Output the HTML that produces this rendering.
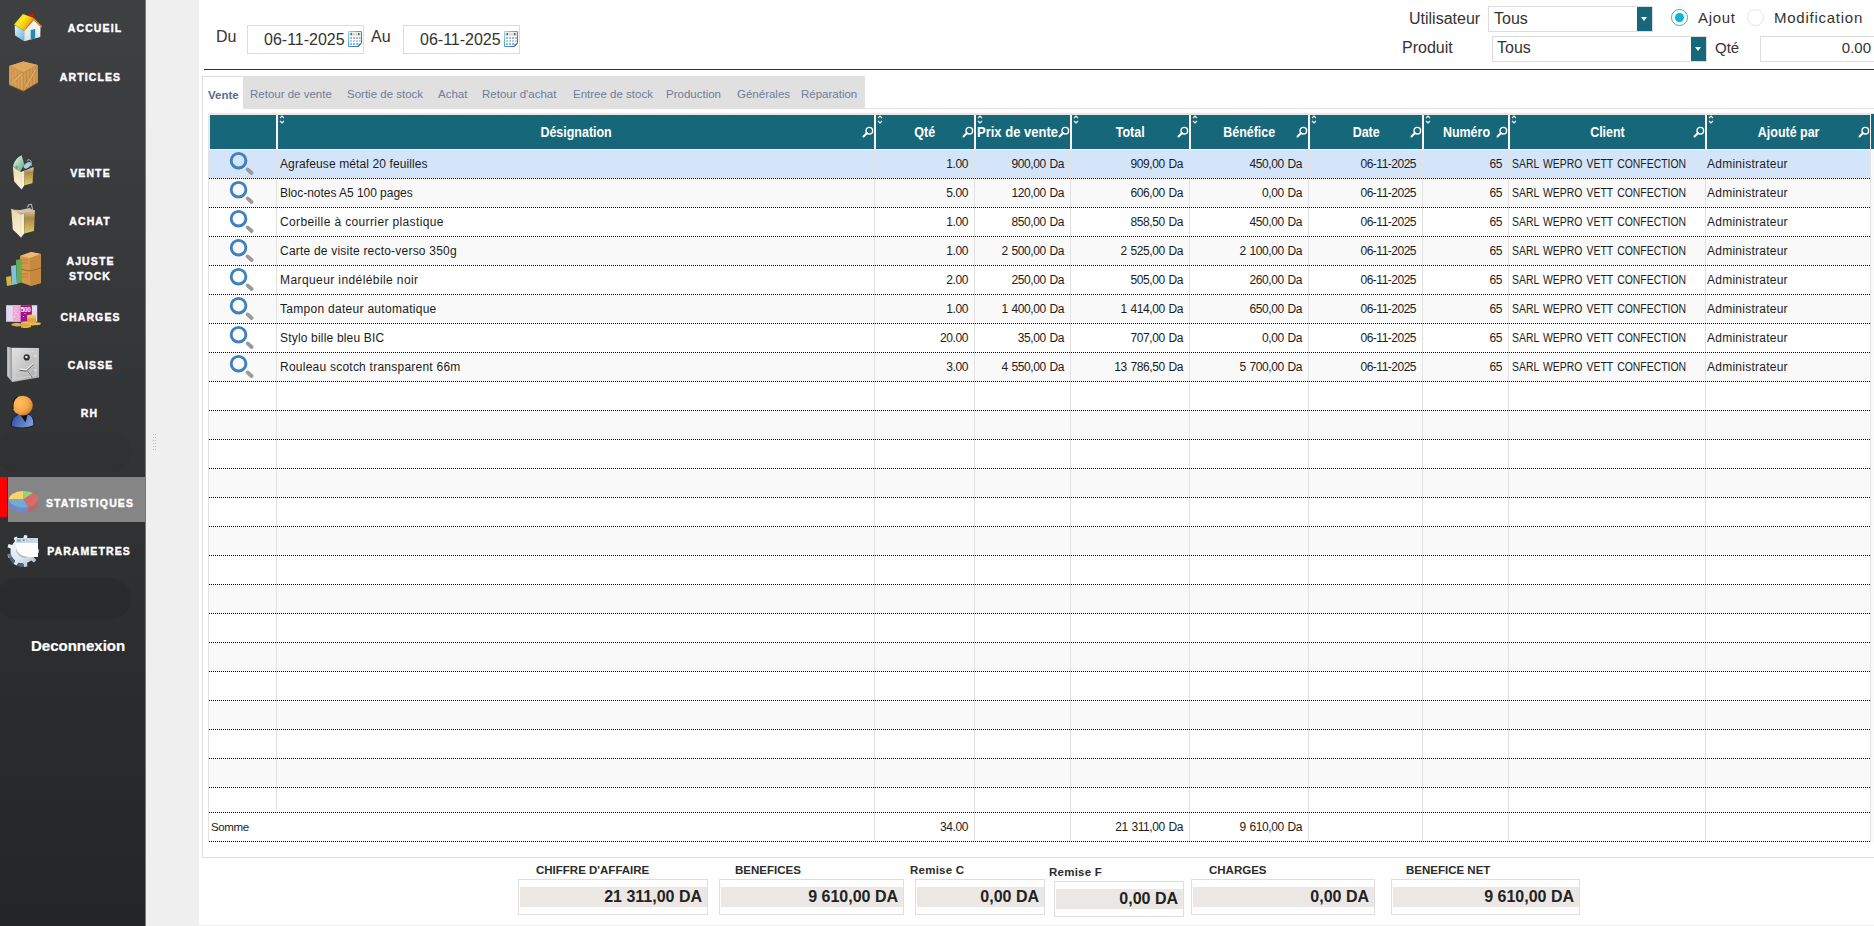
<!DOCTYPE html>
<html><head><meta charset="utf-8"><title>Statistiques</title>
<style>
*{margin:0;padding:0;box-sizing:border-box}
html,body{width:1874px;height:926px;overflow:hidden;background:#fff;font-family:"Liberation Sans",sans-serif;position:relative}
.a{position:absolute}
.side{left:0;top:0;width:145px;height:926px;background:linear-gradient(#3f4042 0%,#333436 45%,#242526 100%)}
.cyan{left:145px;top:0;width:1px;height:926px;background:#12a3a8}
.strip{left:146px;top:0;width:53px;height:926px;background:#efefef}
.mi{color:#fff;font-weight:700;font-size:10.5px;letter-spacing:1.1px;-webkit-text-stroke:0.4px #fff;white-space:nowrap;line-height:15px;text-align:center}
.lbl{font-size:16px;color:#333;white-space:nowrap;line-height:18px}
.inp{border:1px solid #dcdcdc;background:#fff}
.tab{top:87px;font-size:11.5px;color:#6a7894;white-space:nowrap;line-height:14px}
.hc{top:115px;height:34px;background:#17677a}
.ht{top:124px;font-size:14px;font-weight:700;color:#fff;white-space:nowrap;line-height:17px;text-align:center}
.ht span{display:inline-block;transform:scaleX(0.89)}
.row{left:209px;width:1662px;height:29px;border-bottom:1px dotted #000}
.vs{width:1px;background:#e2e2e2}
.ct{font-size:12px;color:#1c1c1c;white-space:nowrap;line-height:14px}
.n{letter-spacing:-0.4px;word-spacing:0.7px}
.dl{height:1px;background:repeating-linear-gradient(90deg,#000 0 1px,transparent 1px 2px)}
.r{text-align:right}
.sl{font-size:11.5px;font-weight:700;color:#2b2b2b;white-space:nowrap;line-height:14px}
.sb{border:1px solid #dedede;background:#fff}
.sf{background:#ebe7e4}
.sv{font-size:16px;font-weight:700;color:#222;white-space:nowrap;line-height:18px;text-align:right}
</style></head><body>

<div class="a side"></div>
<div class="a" style="left:-6px;top:432px;width:137px;height:39px;border-radius:20px;background:rgba(0,0,0,0.03)"></div>
<div class="a" style="left:-4px;top:578px;width:135px;height:42px;border-radius:21px;background:rgba(0,0,0,0.07)"></div>
<div class="a cyan"></div>
<div class="a strip"></div>
<div class="a" style="left:153px;top:434px;width:1px;height:1px;background:#b8b8b8"></div>
<div class="a" style="left:155px;top:434px;width:1px;height:1px;background:#b8b8b8"></div>
<div class="a" style="left:153px;top:437px;width:1px;height:1px;background:#b8b8b8"></div>
<div class="a" style="left:155px;top:437px;width:1px;height:1px;background:#b8b8b8"></div>
<div class="a" style="left:153px;top:440px;width:1px;height:1px;background:#b8b8b8"></div>
<div class="a" style="left:155px;top:440px;width:1px;height:1px;background:#b8b8b8"></div>
<div class="a" style="left:153px;top:443px;width:1px;height:1px;background:#b8b8b8"></div>
<div class="a" style="left:155px;top:443px;width:1px;height:1px;background:#b8b8b8"></div>
<div class="a" style="left:153px;top:446px;width:1px;height:1px;background:#b8b8b8"></div>
<div class="a" style="left:155px;top:446px;width:1px;height:1px;background:#b8b8b8"></div>
<div class="a" style="left:153px;top:449px;width:1px;height:1px;background:#b8b8b8"></div>
<div class="a" style="left:155px;top:449px;width:1px;height:1px;background:#b8b8b8"></div>
<div class="a" style="left:8px;top:477px;width:137px;height:45px;background:#858585"></div>
<div class="a" style="left:0;top:477px;width:7px;height:40px;background:#fe0000"></div>
<div class="a mi" style="left:63px;top:21px;width:63px;text-indent:1px">ACCUEIL</div>
<div class="a mi" style="left:55px;top:70px;width:70px;text-indent:1px">ARTICLES</div>
<div class="a mi" style="left:65px;top:166px;width:50px;text-indent:1px">VENTE</div>
<div class="a mi" style="left:64px;top:214px;width:51px;text-indent:1px">ACHAT</div>
<div class="a mi" style="left:62px;top:254px;width:56px;text-indent:1px">AJUSTE<br>STOCK</div>
<div class="a mi" style="left:56px;top:310px;width:68px;text-indent:1px">CHARGES</div>
<div class="a mi" style="left:63px;top:358px;width:54px;text-indent:1px">CAISSE</div>
<div class="a mi" style="left:76px;top:406px;width:26px;text-indent:1px">RH</div>
<div class="a mi" style="left:41px;top:496px;width:97px;text-indent:1px">STATISTIQUES</div>
<div class="a mi" style="left:42px;top:544px;width:93px;text-indent:1px">PARAMETRES</div>
<div class="a" style="left:31px;top:637px;font-size:15px;font-weight:700;color:#fff;white-space:nowrap;line-height:17px;-webkit-text-stroke:0.2px #fff">Deconnexion</div>
<svg class="a" style="left:0;top:0" width="48" height="48" viewBox="0 0 48 48">
<defs><linearGradient id="hr" x1="0" y1="0" x2="1" y2="0.6"><stop offset="0" stop-color="#f5b800"/><stop offset="0.45" stop-color="#f6ee1c"/><stop offset="1" stop-color="#f28a0c"/></linearGradient>
<linearGradient id="hw" x1="0" y1="0" x2="0" y2="1"><stop offset="0" stop-color="#fafcfd"/><stop offset="1" stop-color="#d3e3ea"/></linearGradient>
<linearGradient id="hl" x1="0" y1="0" x2="1" y2="1"><stop offset="0" stop-color="#e6f6fb"/><stop offset="1" stop-color="#5fb6d6"/></linearGradient></defs>
<path d="M14.7 25.3 L24.2 30.7 L24.2 41.3 L15.1 35.5 Z" fill="url(#hl)"/>
<path d="M24.2 30.7 L33.9 20.1 L40.5 26.5 L40.3 36.9 L24.2 41.3 Z" fill="url(#hw)"/>
<rect x="29.2" y="13.4" width="4.6" height="3.6" rx="1" fill="#e20a0a"/>
<path d="M14 24.6 L22.9 14 L33.9 17.9 L24.2 30.7 Z" fill="url(#hr)"/>
<path d="M33.9 17.9 L42.2 26.6 L41.2 27.4 L33.9 20.4 L24.2 30.9 L24.2 30.7 Z" fill="#f08c12"/>
<path d="M30.7 30 L35.2 29 L35.2 38.6 L30.7 39.8 Z" fill="#2a88a8"/>
</svg>
<svg class="a" style="left:0;top:50px" width="48" height="50" viewBox="0 50 48 50">
<path d="M9.1 65.9 L23.4 61.4 L37.6 65.1 L37.6 82.6 L23.4 91 L9.1 84.7 Z" fill="#d9a159"/>
<path d="M9.1 65.9 L23.4 61.4 L37.6 65.1 L23.4 72.8 Z" fill="#dea862"/>
<path d="M23.4 72.8 L37.6 65.1 L37.6 82.6 L23.4 91 Z" fill="#d59b52"/>
<g stroke="#b07a3a" stroke-width="0.55" fill="none" opacity="0.9">
<path d="M9.1 65.9 L23.4 72.8 L37.6 65.1 M23.4 72.8 L23.4 91"/>
<path d="M11.5 68 L11.5 84 M14 69 L14 86 M17 70.5 L17 87.5 M20 72 L20 89 M26.5 71.5 L26.5 89 M29.5 70 L29.5 87.5 M32.5 68.5 L32.5 86 M35.5 66.5 L35.5 84"/>
</g>
<path d="M10.5 82.8 L21.6 72.4 L23 74 L12 84.6 Z" fill="#e3ae66" stroke="#a87236" stroke-width="0.4"/>
<path d="M24.6 86.4 L35.4 68.4 L36.8 69.6 L26.2 87.6 Z" fill="#e3ae66" stroke="#a87236" stroke-width="0.4"/>
<path d="M9.1 84.7 L23.4 91 L37.6 82.6" stroke="#9c6a30" stroke-width="0.6" fill="none"/>
</svg>
<svg class="a" style="left:0;top:150px" width="44" height="44" viewBox="0 150 44 44">
<defs><linearGradient id="vg" x1="0" y1="0" x2="1" y2="1"><stop offset="0" stop-color="#f4faf2"/><stop offset="1" stop-color="#5aa874"/></linearGradient>
<linearGradient id="vf" x1="0" y1="0" x2="0.3" y2="1"><stop offset="0" stop-color="#ead7a4"/><stop offset="1" stop-color="#fbf3dc"/></linearGradient>
<linearGradient id="vr" x1="0" y1="0" x2="0" y2="1"><stop offset="0" stop-color="#e6d3a8"/><stop offset="0.3" stop-color="#a88a48"/><stop offset="1" stop-color="#e2cc68"/></linearGradient></defs>
<path d="M13 166 Q15 158 21.6 155.2 L24.4 164.7 L20.2 171.4 Z" fill="url(#vg)"/>
<path d="M26.8 160.5 Q29 158.5 31 161 L31.4 166" stroke="#b8b2aa" stroke-width="1" fill="none"/>
<ellipse cx="27.4" cy="165.4" rx="4.2" ry="2.4" transform="rotate(-38 27.4 165.4)" fill="#9fd0ec"/>
<path d="M12.8 166.2 L20.9 171.9 L24.7 170.4 L24.4 185.2 L21.6 189.4 L14.2 181.6 Z" fill="url(#vf)"/>
<path d="M24.7 170.4 L33.7 167.1 L32.5 183.3 L24.4 185.2 Z" fill="url(#vr)"/>
<path d="M20.9 171.9 L21.6 189.4" stroke="#e8d8b0" stroke-width="0.6"/>
<ellipse cx="16.6" cy="167.6" rx="1.3" ry="2" fill="#6aa882"/>
</svg>
<svg class="a" style="left:0;top:198px" width="44" height="44" viewBox="0 198 44 44">
<defs><linearGradient id="af" x1="0" y1="0" x2="0.3" y2="1"><stop offset="0" stop-color="#ead6a2"/><stop offset="1" stop-color="#fbf3dc"/></linearGradient>
<linearGradient id="ar" x1="0" y1="0" x2="0" y2="1"><stop offset="0" stop-color="#dcc6a8"/><stop offset="0.35" stop-color="#a88a48"/><stop offset="1" stop-color="#e0ca66"/></linearGradient></defs>
<path d="M27.5 207.5 Q28.5 203.5 31.5 204.5 L32.8 211" stroke="#bdb6ae" stroke-width="1.1" fill="none"/>
<path d="M11.5 209.5 L20 214 L34.5 211 L29.5 208 L20 210 Z" fill="#d6c0ae"/>
<path d="M11.2 208.5 L20.5 214.5 L24.5 213 L24.2 233.5 L21 237.5 L12.8 229.5 Z" fill="url(#af)"/>
<path d="M24.5 213 L35 210 L34 231 L24.2 233.5 Z" fill="url(#ar)"/>
<path d="M20.5 214.5 L21 237.5" stroke="#e8d8b0" stroke-width="0.6"/>
</svg>
<svg class="a" style="left:5px;top:251px" width="37" height="35" viewBox="0 0 37 35">
<path d="M15 5 L26 1 L36 3 L36 32 L26 35 L15 31 Z" fill="#d4964c"/>
<path d="M15 5 L26 1 L36 3 L25 7 Z" fill="#ebbb7c"/>
<path d="M25 7 L36 3 L36 32 L25 35 Z" fill="#c8883e"/>
<path d="M15 18 L25 20 L36 17" stroke="#9c6a30" stroke-width="1" fill="none"/>
<path d="M17 9 H23 M17 12 H23 M17 23 H23 M17 26 H23" stroke="#b77a3a" stroke-width="0.7"/>
<path d="M1 26 L6 25 L7 34 L2 35 Z" fill="#d6b640"/>
<path d="M6 15 L11 14 L12 33 L7 34 Z" fill="#86c0d8"/>
<path d="M11 9 L17 8 L17 31 L12 33 Z" fill="#5fae58"/>
</svg>
<svg class="a" style="left:0;top:298px" width="46" height="36" viewBox="0 298 46 36">
<defs><linearGradient id="cg" x1="0" y1="0" x2="0" y2="1"><stop offset="0" stop-color="#f6d27a"/><stop offset="0.5" stop-color="#d9a236"/><stop offset="1" stop-color="#f0c050"/></linearGradient></defs>
<rect x="6.1" y="305.2" width="31.1" height="16.5" fill="#e2daee"/>
<rect x="12.7" y="305.2" width="7.9" height="16.5" fill="#f2a9d4"/>
<rect x="20.6" y="305.2" width="11.3" height="16.5" fill="#a2128c"/>
<text x="20.8" y="311.6" font-size="6.4" font-weight="700" fill="#fff" font-family="Liberation Sans" letter-spacing="-0.3">500</text>
<g fill="#fff" opacity="0.8"><rect x="15.5" y="308" width="1" height="1"/><rect x="14" y="310.5" width="1" height="1"/><rect x="15.5" y="313" width="1" height="1"/><rect x="14" y="316" width="1" height="1"/><rect x="23" y="316" width="1" height="1"/><rect x="24.5" y="313" width="1" height="1"/></g>
<path d="M11.3 324 Q16 322.5 21 323.5 L21 326 Q16 327 11.8 325.6 Z" fill="url(#cg)"/>
<path d="M21 322.5 Q26 321 31 322 L31 327 Q26 328.5 21 327.5 Z" fill="url(#cg)"/>
<path d="M26.9 315.5 Q31.5 314 36 315 L36 322.5 Q39 322 40.9 323 L40.5 324.5 Q37 325.5 36.5 325 Q31 326 27.5 324.5 Z" fill="url(#cg)"/>
</svg>
<svg class="a" style="left:0;top:342px" width="46" height="44" viewBox="0 342 46 44">
<defs><linearGradient id="kf" x1="0" y1="0" x2="1" y2="1"><stop offset="0" stop-color="#e4e4e4"/><stop offset="1" stop-color="#a8a8a8"/></linearGradient>
<linearGradient id="ks" x1="0" y1="0" x2="1" y2="0"><stop offset="0" stop-color="#d8d8d8"/><stop offset="1" stop-color="#9a9a9a"/></linearGradient></defs>
<path d="M7.2 346.8 L12 347.7 L12 381.9 L7.2 376 Z" fill="url(#ks)"/>
<path d="M12 347.7 L39 348 L39 377.5 L12 381.9 Z" fill="url(#kf)"/>
<path d="M15 351 L36 351.5 L36 375.5 L15 378.5 Z" fill="none" stroke="#d6d6d6" stroke-width="0.8"/>
<circle cx="26.7" cy="357.4" r="3.1" fill="#2e2e2e"/>
<circle cx="26.4" cy="357" r="1.3" fill="#e8e8e8"/>
<path d="M19.6 369.3 L26.5 370 L33.4 363.4 M26.5 370 L31.5 376.7" stroke="#f2f2f2" stroke-width="1.4" fill="none"/>
<path d="M19.6 370.3 L26.5 371 L33.4 364.4 M27.2 370.5 L32.2 377.3" stroke="#2a2a2a" stroke-width="0.7" fill="none"/>
<rect x="34.5" y="355" width="1.6" height="1.6" fill="#eee"/><rect x="34.5" y="369.5" width="1.6" height="1.6" fill="#eee"/>
</svg>
<svg class="a" style="left:0;top:390px" width="46" height="42" viewBox="0 390 46 42">
<defs><radialGradient id="rhh" cx="0.35" cy="0.35" r="0.75"><stop offset="0" stop-color="#ffc060"/><stop offset="0.6" stop-color="#f3a648"/><stop offset="1" stop-color="#c87428"/></radialGradient>
<linearGradient id="rhb" x1="0" y1="0" x2="1" y2="0.3"><stop offset="0" stop-color="#2a4aa0"/><stop offset="1" stop-color="#7a9ad6"/></linearGradient></defs>
<path d="M11.2 426.5 Q11 417 18 414.5 L28 414 Q34 415.5 34 425.5 Q23 430 11.2 426.5 Z" fill="url(#rhb)" stroke="#0c1530" stroke-width="0.9"/>
<path d="M20.5 415 L25.5 422.5 L27.5 415 Z" fill="#111"/>
<ellipse cx="22.6" cy="405.6" rx="10.2" ry="9.9" fill="url(#rhh)"/>
<path d="M13 409 Q12 400 17 397" stroke="#111" stroke-width="1.2" fill="none"/>
</svg>
<svg class="a" style="left:0;top:484px" width="46" height="36" viewBox="0 484 46 36"><path d="M38.10 499.30 A14.6 8.3 0 0 1 28.01 507.19 L28.01 512.19 A14.6 8.3 0 0 0 38.10 504.30 Z" fill="#b46a6c"/><path d="M28.01 507.19 A14.6 8.3 0 0 1 8.90 499.30 L8.90 504.30 A14.6 8.3 0 0 0 28.01 512.19 Z" fill="#7088c6"/><path d="M23.5 499.3 L8.91 499.59 A14.6 8.3 0 0 1 22.99 491.01 Z" fill="#fcd26a"/><path d="M23.5 499.3 L22.99 491.01 A14.6 8.3 0 0 1 33.08 493.04 Z" fill="#8ed67e"/><path d="M23.5 499.3 L33.08 493.04 A14.6 8.3 0 0 1 28.01 507.19 Z" fill="#d96a6a"/><path d="M23.5 499.3 L28.01 507.19 A14.6 8.3 0 0 1 8.91 499.59 Z" fill="#74aad6"/></svg>
<svg class="a" style="left:5px;top:534px" width="36" height="34" viewBox="0 0 34 34">
<defs><linearGradient id="gr" x1="0" y1="0" x2="1" y2="1"><stop offset="0" stop-color="#f2f8fd"/><stop offset="0.55" stop-color="#dde9f4"/><stop offset="1" stop-color="#9fb3c6"/></linearGradient></defs>
<path d="M29.1 13.7 L29.3 15.0 L32.9 15.3 L32.9 18.7 L29.3 19.0 L28.4 22.2 L27.7 23.4 L30.3 25.9 L28.1 28.5 L25.2 26.4 L22.4 28.3 L21.1 28.8 L21.4 32.4 L18.1 33.0 L17.2 29.5 L13.9 29.1 L12.5 28.7 L10.5 31.6 L7.6 29.9 L9.1 26.7 L6.8 24.2 L6.1 23.1 L2.6 24.0 L1.5 20.8 L4.7 19.4 L4.5 16.0 L4.7 14.6 L1.5 13.2 L2.6 10.0 L6.1 10.9 L8.1 8.2 L9.1 7.3 L7.6 4.1 L10.5 2.4 L12.5 5.3 L15.8 4.6 L17.2 4.5 L18.1 1.0 L21.4 1.6 L21.1 5.2 L24.1 6.7 L25.2 7.6 L28.1 5.5 L30.3 8.1 L27.7 10.6 Z" fill="url(#gr)"/>
<path d="M1.5 20.8 L4.7 19.4 L6.1 23.1 L6.8 24.2 L9.1 26.7 L7.6 29.9 L10.5 31.6 L12.5 28.7 L13.9 29.1 L17.2 29.5 L18.1 33.0 L14 33 L6 29 Z" fill="#56687a" opacity="0.85"/>
<rect x="10" y="4" width="22" height="5" fill="#c9d8ea"/>
<rect x="11" y="5.5" width="4" height="2" fill="#7aa6d6"/><rect x="17" y="5.5" width="1.5" height="1.5" fill="#e04040"/><rect x="20" y="5.5" width="1.5" height="1.5" fill="#9ed08a"/><rect x="25" y="5.5" width="1.5" height="1.5" fill="#e8c040"/>
<path d="M10 9 L32 9 L32 23 L22 23 Q12 22 10 14 Z" fill="#fdfdfd"/>
<path d="M10 14 Q12 22 22 23 L20 24 Q11 23 10 16 Z" fill="#b8bcc0"/>
</svg>
<div class="a lbl" style="left:216px;top:28px">Du</div>
<div class="a inp" style="left:247px;top:25px;width:117px;height:29px"></div>
<div class="a lbl" style="left:264px;top:31px">06-11-2025</div>
<div class="a lbl" style="left:371px;top:28px">Au</div>
<div class="a inp" style="left:403px;top:25px;width:117px;height:29px"></div>
<div class="a lbl" style="left:420px;top:31px">06-11-2025</div>
<svg class="a" style="left:348px;top:31px" width="15" height="17" viewBox="0 0 15 17">
<defs><linearGradient id="cb348" x1="0" y1="0" x2="1" y2="1"><stop offset="0" stop-color="#9ad8f0"/><stop offset="0.5" stop-color="#4c98d4"/><stop offset="1" stop-color="#1e5fb0"/></linearGradient></defs>
<path d="M0.5 0.5 H13.5 V12.2 L9.8 15.5 H0.5 Z" fill="#fff" stroke="url(#cb348)" stroke-width="1"/>
<rect x="1" y="1.5" width="12" height="3.3" fill="#dedede"/>
<path d="M2 3.1 L3.8 1.8 L3.8 4.4 Z M12 3.1 L10.2 1.8 L10.2 4.4 Z" fill="#3a3a3a"/>
<g fill="#8ab8f8"><rect x="2" y="6" width="2" height="2"/><rect x="5" y="6" width="2" height="2"/><rect x="8" y="6" width="2" height="2"/><rect x="11" y="6" width="1.7" height="2"/>
<rect x="2" y="12" width="2" height="2"/><rect x="5" y="12" width="2" height="2"/><rect x="8" y="12" width="2" height="2"/></g>
<g fill="#c8c8c8"><rect x="2" y="9" width="2" height="2"/><rect x="5" y="9" width="2" height="2"/><rect x="8" y="9" width="2" height="2"/><rect x="11" y="9" width="1.7" height="2"/></g>
<path d="M9.5 15.2 L13.2 12 L10.5 12.5 Z" fill="#bdb8b0"/>
<path d="M9.8 15.5 L13.5 12.2" stroke="#1e5aa8" stroke-width="1.2" stroke-dasharray="1 0.6"/>
</svg>
<svg class="a" style="left:504px;top:31px" width="15" height="17" viewBox="0 0 15 17">
<defs><linearGradient id="cb504" x1="0" y1="0" x2="1" y2="1"><stop offset="0" stop-color="#9ad8f0"/><stop offset="0.5" stop-color="#4c98d4"/><stop offset="1" stop-color="#1e5fb0"/></linearGradient></defs>
<path d="M0.5 0.5 H13.5 V12.2 L9.8 15.5 H0.5 Z" fill="#fff" stroke="url(#cb504)" stroke-width="1"/>
<rect x="1" y="1.5" width="12" height="3.3" fill="#dedede"/>
<path d="M2 3.1 L3.8 1.8 L3.8 4.4 Z M12 3.1 L10.2 1.8 L10.2 4.4 Z" fill="#3a3a3a"/>
<g fill="#8ab8f8"><rect x="2" y="6" width="2" height="2"/><rect x="5" y="6" width="2" height="2"/><rect x="8" y="6" width="2" height="2"/><rect x="11" y="6" width="1.7" height="2"/>
<rect x="2" y="12" width="2" height="2"/><rect x="5" y="12" width="2" height="2"/><rect x="8" y="12" width="2" height="2"/></g>
<g fill="#c8c8c8"><rect x="2" y="9" width="2" height="2"/><rect x="5" y="9" width="2" height="2"/><rect x="8" y="9" width="2" height="2"/><rect x="11" y="9" width="1.7" height="2"/></g>
<path d="M9.5 15.2 L13.2 12 L10.5 12.5 Z" fill="#bdb8b0"/>
<path d="M9.8 15.5 L13.5 12.2" stroke="#1e5aa8" stroke-width="1.2" stroke-dasharray="1 0.6"/>
</svg>
<div class="a lbl" style="left:1409px;top:10px">Utilisateur</div>
<div class="a inp" style="left:1488px;top:6px;width:165px;height:26px"></div>
<div class="a lbl" style="left:1494px;top:10px">Tous</div>
<div class="a" style="left:1637px;top:7px;width:15px;height:24px;background:#17677a"></div>
<div class="a" style="left:1641px;top:17px;width:0;height:0;border-left:3.7px solid transparent;border-right:3.7px solid transparent;border-top:4.5px solid #fff"></div>
<div class="a lbl" style="left:1402px;top:39px">Produit</div>
<div class="a inp" style="left:1492px;top:36px;width:215px;height:26px"></div>
<div class="a lbl" style="left:1497px;top:39px">Tous</div>
<div class="a" style="left:1691px;top:37px;width:15px;height:24px;background:#17677a"></div>
<div class="a" style="left:1695px;top:47px;width:0;height:0;border-left:3.7px solid transparent;border-right:3.7px solid transparent;border-top:4.5px solid #fff"></div>
<div class="a lbl" style="left:1715px;top:39px;font-size:15px">Qté</div>
<div class="a inp" style="left:1760px;top:36px;width:130px;height:26px"></div>
<div class="a lbl" style="left:1800px;top:39px;width:71px;text-align:right;font-size:15px">0.00</div>
<div class="a" style="left:1671px;top:9px;width:17px;height:17px;border-radius:50%;border:1.5px solid #18b8d4;background:#fff"></div>
<div class="a" style="left:1675px;top:13px;width:9px;height:9px;border-radius:50%;background:#0cb5d3"></div>
<div class="a lbl" style="left:1698px;top:9px;font-size:15px;letter-spacing:0.7px;color:#333">Ajout</div>
<div class="a" style="left:1747px;top:9px;width:17px;height:17px;border-radius:50%;border:1px solid #e4e4e4;background:#fff"></div>
<div class="a lbl" style="left:1774px;top:9px;font-size:15px;letter-spacing:0.75px;color:#333">Modification</div>
<div class="a" style="left:204px;top:69px;width:1670px;height:1px;background:#333333"></div>
<div class="a" style="left:202px;top:76px;width:1680px;height:782px;border:1px solid #dedede;border-top:none"></div>
<div class="a" style="left:202px;top:76px;width:41px;height:1px;background:#dedede"></div>
<div class="a" style="left:243px;top:108px;width:1631px;height:1px;background:#e4e4e4"></div>
<div class="a" style="left:243px;top:76px;width:622px;height:32px;background:#e0e0e0"></div>
<div class="a tab" style="left:208px;top:88px;font-weight:700;color:#5b6a88">Vente</div>
<div class="a tab" style="left:250px;font-weight:400;color:#6f7d98">Retour de vente</div>
<div class="a tab" style="left:347px;font-weight:400;color:#6f7d98">Sortie de stock</div>
<div class="a tab" style="left:438px;font-weight:400;color:#6f7d98">Achat</div>
<div class="a tab" style="left:482px;font-weight:400;color:#6f7d98">Retour d'achat</div>
<div class="a tab" style="left:573px;font-weight:400;color:#6f7d98">Entree de stock</div>
<div class="a tab" style="left:666px;font-weight:400;color:#6f7d98">Production</div>
<div class="a tab" style="left:737px;font-weight:400;color:#6f7d98">Générales</div>
<div class="a tab" style="left:801px;font-weight:400;color:#6f7d98">Réparation</div>
<div class="a" style="left:208px;top:113px;width:1666px;height:2px;background:#ebe7e5"></div>
<div class="a" style="left:208px;top:113px;width:2px;height:36px;background:#e8e6e5"></div>
<div class="a" style="left:208px;top:149px;width:1px;height:693px;background:#e2e2e2"></div>
<div class="a" style="left:210px;top:115px;width:1664px;height:34px;background:#fbf3f0"></div>
<div class="a hc" style="left:210px;width:66px"></div>
<div class="a hc" style="left:278px;width:596px"></div>
<div class="a hc" style="left:876px;width:98px"></div>
<div class="a hc" style="left:976px;width:94px"></div>
<div class="a hc" style="left:1072px;width:117px"></div>
<div class="a hc" style="left:1191px;width:117px"></div>
<div class="a hc" style="left:1310px;width:112px"></div>
<div class="a hc" style="left:1424px;width:84px"></div>
<div class="a hc" style="left:1510px;width:195px"></div>
<div class="a hc" style="left:1707px;width:163px"></div>
<div class="a hc" style="left:1871px;top:114px;height:35px;width:3px"></div>
<svg class="a" style="left:279px;top:115px" width="6" height="9" viewBox="0 0 6 9"><path d="M1 3 L3 1 L5 3 M1 6 L3 8 L5 6" stroke="#fff" stroke-width="1.1" fill="none"/></svg>
<svg class="a" style="left:862px;top:126px" width="12" height="12" viewBox="0 0 12 12"><circle cx="7.3" cy="4.7" r="3.3" stroke="#fff" stroke-width="1.4" fill="none"/><path d="M5 7 L1.5 10.5" stroke="#fff" stroke-width="2" stroke-linecap="round"/></svg>
<div class="a ht" style="left:278px;width:596px"><span>Désignation</span></div>
<svg class="a" style="left:877px;top:115px" width="6" height="9" viewBox="0 0 6 9"><path d="M1 3 L3 1 L5 3 M1 6 L3 8 L5 6" stroke="#fff" stroke-width="1.1" fill="none"/></svg>
<svg class="a" style="left:962px;top:126px" width="12" height="12" viewBox="0 0 12 12"><circle cx="7.3" cy="4.7" r="3.3" stroke="#fff" stroke-width="1.4" fill="none"/><path d="M5 7 L1.5 10.5" stroke="#fff" stroke-width="2" stroke-linecap="round"/></svg>
<div class="a ht" style="left:876px;width:98px"><span>Qté</span></div>
<svg class="a" style="left:977px;top:115px" width="6" height="9" viewBox="0 0 6 9"><path d="M1 3 L3 1 L5 3 M1 6 L3 8 L5 6" stroke="#fff" stroke-width="1.1" fill="none"/></svg>
<svg class="a" style="left:1058px;top:126px" width="12" height="12" viewBox="0 0 12 12"><circle cx="7.3" cy="4.7" r="3.3" stroke="#fff" stroke-width="1.4" fill="none"/><path d="M5 7 L1.5 10.5" stroke="#fff" stroke-width="2" stroke-linecap="round"/></svg>
<div class="a ht" style="left:977px;text-align:left"><span style="transform-origin:0 50%;transform:scaleX(0.93)">Prix de vente</span></div>
<svg class="a" style="left:1073px;top:115px" width="6" height="9" viewBox="0 0 6 9"><path d="M1 3 L3 1 L5 3 M1 6 L3 8 L5 6" stroke="#fff" stroke-width="1.1" fill="none"/></svg>
<svg class="a" style="left:1177px;top:126px" width="12" height="12" viewBox="0 0 12 12"><circle cx="7.3" cy="4.7" r="3.3" stroke="#fff" stroke-width="1.4" fill="none"/><path d="M5 7 L1.5 10.5" stroke="#fff" stroke-width="2" stroke-linecap="round"/></svg>
<div class="a ht" style="left:1072px;width:117px"><span>Total</span></div>
<svg class="a" style="left:1192px;top:115px" width="6" height="9" viewBox="0 0 6 9"><path d="M1 3 L3 1 L5 3 M1 6 L3 8 L5 6" stroke="#fff" stroke-width="1.1" fill="none"/></svg>
<svg class="a" style="left:1296px;top:126px" width="12" height="12" viewBox="0 0 12 12"><circle cx="7.3" cy="4.7" r="3.3" stroke="#fff" stroke-width="1.4" fill="none"/><path d="M5 7 L1.5 10.5" stroke="#fff" stroke-width="2" stroke-linecap="round"/></svg>
<div class="a ht" style="left:1191px;width:117px"><span>Bénéfice</span></div>
<svg class="a" style="left:1311px;top:115px" width="6" height="9" viewBox="0 0 6 9"><path d="M1 3 L3 1 L5 3 M1 6 L3 8 L5 6" stroke="#fff" stroke-width="1.1" fill="none"/></svg>
<svg class="a" style="left:1410px;top:126px" width="12" height="12" viewBox="0 0 12 12"><circle cx="7.3" cy="4.7" r="3.3" stroke="#fff" stroke-width="1.4" fill="none"/><path d="M5 7 L1.5 10.5" stroke="#fff" stroke-width="2" stroke-linecap="round"/></svg>
<div class="a ht" style="left:1310px;width:112px"><span>Date</span></div>
<svg class="a" style="left:1425px;top:115px" width="6" height="9" viewBox="0 0 6 9"><path d="M1 3 L3 1 L5 3 M1 6 L3 8 L5 6" stroke="#fff" stroke-width="1.1" fill="none"/></svg>
<svg class="a" style="left:1496px;top:126px" width="12" height="12" viewBox="0 0 12 12"><circle cx="7.3" cy="4.7" r="3.3" stroke="#fff" stroke-width="1.4" fill="none"/><path d="M5 7 L1.5 10.5" stroke="#fff" stroke-width="2" stroke-linecap="round"/></svg>
<div class="a ht" style="left:1424px;width:84px"><span>Numéro</span></div>
<svg class="a" style="left:1511px;top:115px" width="6" height="9" viewBox="0 0 6 9"><path d="M1 3 L3 1 L5 3 M1 6 L3 8 L5 6" stroke="#fff" stroke-width="1.1" fill="none"/></svg>
<svg class="a" style="left:1693px;top:126px" width="12" height="12" viewBox="0 0 12 12"><circle cx="7.3" cy="4.7" r="3.3" stroke="#fff" stroke-width="1.4" fill="none"/><path d="M5 7 L1.5 10.5" stroke="#fff" stroke-width="2" stroke-linecap="round"/></svg>
<div class="a ht" style="left:1510px;width:195px"><span>Client</span></div>
<svg class="a" style="left:1708px;top:115px" width="6" height="9" viewBox="0 0 6 9"><path d="M1 3 L3 1 L5 3 M1 6 L3 8 L5 6" stroke="#fff" stroke-width="1.1" fill="none"/></svg>
<svg class="a" style="left:1858px;top:126px" width="12" height="12" viewBox="0 0 12 12"><circle cx="7.3" cy="4.7" r="3.3" stroke="#fff" stroke-width="1.4" fill="none"/><path d="M5 7 L1.5 10.5" stroke="#fff" stroke-width="2" stroke-linecap="round"/></svg>
<div class="a ht" style="left:1707px;width:163px"><span>Ajouté par</span></div>
<div class="a" style="left:209px;top:150px;width:1662px;height:28px;background:#d4e5fa"></div>
<div class="a" style="left:209px;top:179px;width:1662px;height:28px;background:#f9f9f9"></div>
<div class="a" style="left:209px;top:208px;width:1662px;height:28px;background:#ffffff"></div>
<div class="a" style="left:209px;top:237px;width:1662px;height:28px;background:#f9f9f9"></div>
<div class="a" style="left:209px;top:266px;width:1662px;height:28px;background:#ffffff"></div>
<div class="a" style="left:209px;top:295px;width:1662px;height:28px;background:#f9f9f9"></div>
<div class="a" style="left:209px;top:324px;width:1662px;height:28px;background:#ffffff"></div>
<div class="a" style="left:209px;top:353px;width:1662px;height:28px;background:#f9f9f9"></div>
<div class="a" style="left:209px;top:382px;width:1662px;height:28px;background:#ffffff"></div>
<div class="a" style="left:209px;top:411px;width:1662px;height:28px;background:#f9f9f9"></div>
<div class="a" style="left:209px;top:440px;width:1662px;height:28px;background:#ffffff"></div>
<div class="a" style="left:209px;top:469px;width:1662px;height:28px;background:#f9f9f9"></div>
<div class="a" style="left:209px;top:498px;width:1662px;height:28px;background:#ffffff"></div>
<div class="a" style="left:209px;top:527px;width:1662px;height:28px;background:#f9f9f9"></div>
<div class="a" style="left:209px;top:556px;width:1662px;height:28px;background:#ffffff"></div>
<div class="a" style="left:209px;top:585px;width:1662px;height:28px;background:#f9f9f9"></div>
<div class="a" style="left:209px;top:614px;width:1662px;height:28px;background:#ffffff"></div>
<div class="a" style="left:209px;top:643px;width:1662px;height:28px;background:#f9f9f9"></div>
<div class="a" style="left:209px;top:672px;width:1662px;height:28px;background:#ffffff"></div>
<div class="a" style="left:209px;top:701px;width:1662px;height:28px;background:#f9f9f9"></div>
<div class="a" style="left:209px;top:730px;width:1662px;height:28px;background:#ffffff"></div>
<div class="a" style="left:209px;top:759px;width:1662px;height:28px;background:#f9f9f9"></div>
<div class="a" style="left:209px;top:788px;width:1662px;height:24px;background:#ffffff"></div>
<div class="a" style="left:210px;top:149px;width:1661px;height:1px;background:#f4f4f4"></div>
<div class="a vs" style="left:276px;top:149px;height:663px"></div>
<div class="a vs" style="left:874px;top:149px;height:663px"></div>
<div class="a vs" style="left:974px;top:149px;height:663px"></div>
<div class="a vs" style="left:1070px;top:149px;height:663px"></div>
<div class="a vs" style="left:1189px;top:149px;height:663px"></div>
<div class="a vs" style="left:1308px;top:149px;height:663px"></div>
<div class="a vs" style="left:1422px;top:149px;height:663px"></div>
<div class="a vs" style="left:1508px;top:149px;height:663px"></div>
<div class="a vs" style="left:1705px;top:149px;height:663px"></div>
<div class="a vs" style="left:1870px;top:149px;height:663px"></div>
<div class="a vs" style="left:874px;top:812px;height:29px"></div>
<div class="a vs" style="left:974px;top:812px;height:29px"></div>
<div class="a vs" style="left:1070px;top:812px;height:29px"></div>
<div class="a vs" style="left:1189px;top:812px;height:29px"></div>
<div class="a vs" style="left:1308px;top:812px;height:29px"></div>
<div class="a vs" style="left:1422px;top:812px;height:29px"></div>
<div class="a vs" style="left:1508px;top:812px;height:29px"></div>
<div class="a vs" style="left:1705px;top:812px;height:29px"></div>
<div class="a vs" style="left:1870px;top:812px;height:29px"></div>
<div class="a dl" style="left:209px;top:178px;width:1662px"></div>
<div class="a dl" style="left:209px;top:207px;width:1662px"></div>
<div class="a dl" style="left:209px;top:236px;width:1662px"></div>
<div class="a dl" style="left:209px;top:265px;width:1662px"></div>
<div class="a dl" style="left:209px;top:294px;width:1662px"></div>
<div class="a dl" style="left:209px;top:323px;width:1662px"></div>
<div class="a dl" style="left:209px;top:352px;width:1662px"></div>
<div class="a dl" style="left:209px;top:381px;width:1662px"></div>
<div class="a dl" style="left:209px;top:410px;width:1662px"></div>
<div class="a dl" style="left:209px;top:439px;width:1662px"></div>
<div class="a dl" style="left:209px;top:468px;width:1662px"></div>
<div class="a dl" style="left:209px;top:497px;width:1662px"></div>
<div class="a dl" style="left:209px;top:526px;width:1662px"></div>
<div class="a dl" style="left:209px;top:555px;width:1662px"></div>
<div class="a dl" style="left:209px;top:584px;width:1662px"></div>
<div class="a dl" style="left:209px;top:613px;width:1662px"></div>
<div class="a dl" style="left:209px;top:642px;width:1662px"></div>
<div class="a dl" style="left:209px;top:671px;width:1662px"></div>
<div class="a dl" style="left:209px;top:700px;width:1662px"></div>
<div class="a dl" style="left:209px;top:729px;width:1662px"></div>
<div class="a dl" style="left:209px;top:758px;width:1662px"></div>
<div class="a dl" style="left:209px;top:787px;width:1662px"></div>
<div class="a dl" style="left:209px;top:812px;width:1662px"></div>
<div class="a dl" style="left:209px;top:841px;width:1662px"></div>
<div class="a" style="left:1871px;top:149px;width:3px;height:693px;background:#fafafa"></div>
<svg class="a" style="left:229px;top:151px" width="26" height="26" viewBox="0 0 26 26"><circle cx="9.55" cy="9.7" r="7.35" stroke="#3f80bf" stroke-width="2.9" fill="none"/><path d="M18.6 18.4 L22.6 22" stroke="#999" stroke-width="3.8" stroke-linecap="round"/></svg>
<div class="a ct" style="left:280px;top:157px;letter-spacing:0.11px">Agrafeuse métal 20 feuilles</div>
<div class="a ct r n" style="left:876px;top:157px;width:92px">1.00</div>
<div class="a ct r n" style="left:976px;top:157px;width:88px">900,00 Da</div>
<div class="a ct r n" style="left:1072px;top:157px;width:111px">909,00 Da</div>
<div class="a ct r n" style="left:1191px;top:157px;width:111px">450,00 Da</div>
<div class="a ct r" style="left:1310px;top:157px;width:106px;letter-spacing:-0.5px">06-11-2025</div>
<div class="a ct r n" style="left:1424px;top:157px;width:78px">65</div>
<div class="a ct" style="left:1512px;top:157px;transform:scaleX(0.868);transform-origin:0 0;word-spacing:1.5px">SARL WEPRO VETT CONFECTION</div>
<div class="a ct" style="left:1707px;top:157px;letter-spacing:0.25px">Administrateur</div>
<svg class="a" style="left:229px;top:180px" width="26" height="26" viewBox="0 0 26 26"><circle cx="9.55" cy="9.7" r="7.35" stroke="#3f80bf" stroke-width="2.9" fill="none"/><path d="M18.6 18.4 L22.6 22" stroke="#999" stroke-width="3.8" stroke-linecap="round"/></svg>
<div class="a ct" style="left:280px;top:186px;letter-spacing:-0.034px">Bloc-notes A5 100 pages</div>
<div class="a ct r n" style="left:876px;top:186px;width:92px">5.00</div>
<div class="a ct r n" style="left:976px;top:186px;width:88px">120,00 Da</div>
<div class="a ct r n" style="left:1072px;top:186px;width:111px">606,00 Da</div>
<div class="a ct r n" style="left:1191px;top:186px;width:111px">0,00 Da</div>
<div class="a ct r" style="left:1310px;top:186px;width:106px;letter-spacing:-0.5px">06-11-2025</div>
<div class="a ct r n" style="left:1424px;top:186px;width:78px">65</div>
<div class="a ct" style="left:1512px;top:186px;transform:scaleX(0.868);transform-origin:0 0;word-spacing:1.5px">SARL WEPRO VETT CONFECTION</div>
<div class="a ct" style="left:1707px;top:186px;letter-spacing:0.25px">Administrateur</div>
<svg class="a" style="left:229px;top:209px" width="26" height="26" viewBox="0 0 26 26"><circle cx="9.55" cy="9.7" r="7.35" stroke="#3f80bf" stroke-width="2.9" fill="none"/><path d="M18.6 18.4 L22.6 22" stroke="#999" stroke-width="3.8" stroke-linecap="round"/></svg>
<div class="a ct" style="left:280px;top:215px;letter-spacing:0.371px">Corbeille à courrier plastique</div>
<div class="a ct r n" style="left:876px;top:215px;width:92px">1.00</div>
<div class="a ct r n" style="left:976px;top:215px;width:88px">850,00 Da</div>
<div class="a ct r n" style="left:1072px;top:215px;width:111px">858,50 Da</div>
<div class="a ct r n" style="left:1191px;top:215px;width:111px">450,00 Da</div>
<div class="a ct r" style="left:1310px;top:215px;width:106px;letter-spacing:-0.5px">06-11-2025</div>
<div class="a ct r n" style="left:1424px;top:215px;width:78px">65</div>
<div class="a ct" style="left:1512px;top:215px;transform:scaleX(0.868);transform-origin:0 0;word-spacing:1.5px">SARL WEPRO VETT CONFECTION</div>
<div class="a ct" style="left:1707px;top:215px;letter-spacing:0.25px">Administrateur</div>
<svg class="a" style="left:229px;top:238px" width="26" height="26" viewBox="0 0 26 26"><circle cx="9.55" cy="9.7" r="7.35" stroke="#3f80bf" stroke-width="2.9" fill="none"/><path d="M18.6 18.4 L22.6 22" stroke="#999" stroke-width="3.8" stroke-linecap="round"/></svg>
<div class="a ct" style="left:280px;top:244px;letter-spacing:0.21px">Carte de visite recto-verso 350g</div>
<div class="a ct r n" style="left:876px;top:244px;width:92px">1.00</div>
<div class="a ct r n" style="left:976px;top:244px;width:88px">2 500,00 Da</div>
<div class="a ct r n" style="left:1072px;top:244px;width:111px">2 525,00 Da</div>
<div class="a ct r n" style="left:1191px;top:244px;width:111px">2 100,00 Da</div>
<div class="a ct r" style="left:1310px;top:244px;width:106px;letter-spacing:-0.5px">06-11-2025</div>
<div class="a ct r n" style="left:1424px;top:244px;width:78px">65</div>
<div class="a ct" style="left:1512px;top:244px;transform:scaleX(0.868);transform-origin:0 0;word-spacing:1.5px">SARL WEPRO VETT CONFECTION</div>
<div class="a ct" style="left:1707px;top:244px;letter-spacing:0.25px">Administrateur</div>
<svg class="a" style="left:229px;top:267px" width="26" height="26" viewBox="0 0 26 26"><circle cx="9.55" cy="9.7" r="7.35" stroke="#3f80bf" stroke-width="2.9" fill="none"/><path d="M18.6 18.4 L22.6 22" stroke="#999" stroke-width="3.8" stroke-linecap="round"/></svg>
<div class="a ct" style="left:280px;top:273px;letter-spacing:0.407px">Marqueur indélébile noir</div>
<div class="a ct r n" style="left:876px;top:273px;width:92px">2.00</div>
<div class="a ct r n" style="left:976px;top:273px;width:88px">250,00 Da</div>
<div class="a ct r n" style="left:1072px;top:273px;width:111px">505,00 Da</div>
<div class="a ct r n" style="left:1191px;top:273px;width:111px">260,00 Da</div>
<div class="a ct r" style="left:1310px;top:273px;width:106px;letter-spacing:-0.5px">06-11-2025</div>
<div class="a ct r n" style="left:1424px;top:273px;width:78px">65</div>
<div class="a ct" style="left:1512px;top:273px;transform:scaleX(0.868);transform-origin:0 0;word-spacing:1.5px">SARL WEPRO VETT CONFECTION</div>
<div class="a ct" style="left:1707px;top:273px;letter-spacing:0.25px">Administrateur</div>
<svg class="a" style="left:229px;top:296px" width="26" height="26" viewBox="0 0 26 26"><circle cx="9.55" cy="9.7" r="7.35" stroke="#3f80bf" stroke-width="2.9" fill="none"/><path d="M18.6 18.4 L22.6 22" stroke="#999" stroke-width="3.8" stroke-linecap="round"/></svg>
<div class="a ct" style="left:280px;top:302px;letter-spacing:0.286px">Tampon dateur automatique</div>
<div class="a ct r n" style="left:876px;top:302px;width:92px">1.00</div>
<div class="a ct r n" style="left:976px;top:302px;width:88px">1 400,00 Da</div>
<div class="a ct r n" style="left:1072px;top:302px;width:111px">1 414,00 Da</div>
<div class="a ct r n" style="left:1191px;top:302px;width:111px">650,00 Da</div>
<div class="a ct r" style="left:1310px;top:302px;width:106px;letter-spacing:-0.5px">06-11-2025</div>
<div class="a ct r n" style="left:1424px;top:302px;width:78px">65</div>
<div class="a ct" style="left:1512px;top:302px;transform:scaleX(0.868);transform-origin:0 0;word-spacing:1.5px">SARL WEPRO VETT CONFECTION</div>
<div class="a ct" style="left:1707px;top:302px;letter-spacing:0.25px">Administrateur</div>
<svg class="a" style="left:229px;top:325px" width="26" height="26" viewBox="0 0 26 26"><circle cx="9.55" cy="9.7" r="7.35" stroke="#3f80bf" stroke-width="2.9" fill="none"/><path d="M18.6 18.4 L22.6 22" stroke="#999" stroke-width="3.8" stroke-linecap="round"/></svg>
<div class="a ct" style="left:280px;top:331px;letter-spacing:0.183px">Stylo bille bleu BIC</div>
<div class="a ct r n" style="left:876px;top:331px;width:92px">20.00</div>
<div class="a ct r n" style="left:976px;top:331px;width:88px">35,00 Da</div>
<div class="a ct r n" style="left:1072px;top:331px;width:111px">707,00 Da</div>
<div class="a ct r n" style="left:1191px;top:331px;width:111px">0,00 Da</div>
<div class="a ct r" style="left:1310px;top:331px;width:106px;letter-spacing:-0.5px">06-11-2025</div>
<div class="a ct r n" style="left:1424px;top:331px;width:78px">65</div>
<div class="a ct" style="left:1512px;top:331px;transform:scaleX(0.868);transform-origin:0 0;word-spacing:1.5px">SARL WEPRO VETT CONFECTION</div>
<div class="a ct" style="left:1707px;top:331px;letter-spacing:0.25px">Administrateur</div>
<svg class="a" style="left:229px;top:354px" width="26" height="26" viewBox="0 0 26 26"><circle cx="9.55" cy="9.7" r="7.35" stroke="#3f80bf" stroke-width="2.9" fill="none"/><path d="M18.6 18.4 L22.6 22" stroke="#999" stroke-width="3.8" stroke-linecap="round"/></svg>
<div class="a ct" style="left:280px;top:360px;letter-spacing:0.237px">Rouleau scotch transparent 66m</div>
<div class="a ct r n" style="left:876px;top:360px;width:92px">3.00</div>
<div class="a ct r n" style="left:976px;top:360px;width:88px">4 550,00 Da</div>
<div class="a ct r n" style="left:1072px;top:360px;width:111px">13 786,50 Da</div>
<div class="a ct r n" style="left:1191px;top:360px;width:111px">5 700,00 Da</div>
<div class="a ct r" style="left:1310px;top:360px;width:106px;letter-spacing:-0.5px">06-11-2025</div>
<div class="a ct r n" style="left:1424px;top:360px;width:78px">65</div>
<div class="a ct" style="left:1512px;top:360px;transform:scaleX(0.868);transform-origin:0 0;word-spacing:1.5px">SARL WEPRO VETT CONFECTION</div>
<div class="a ct" style="left:1707px;top:360px;letter-spacing:0.25px">Administrateur</div>
<div class="a ct" style="left:211px;top:820px;letter-spacing:-0.35px;font-size:11.5px">Somme</div>
<div class="a ct r n" style="left:876px;top:820px;width:92px">34.00</div>
<div class="a ct r n" style="left:1072px;top:820px;width:111px">21 311,00 Da</div>
<div class="a ct r n" style="left:1191px;top:820px;width:111px">9 610,00 Da</div>
<div class="a" style="left:199px;top:925px;width:1675px;height:1px;background:#efefef"></div>
<div class="a sl" style="left:536px;top:863px;">CHIFFRE D'AFFAIRE</div>
<div class="a sb" style="left:518px;top:879px;width:190px;height:36px"></div>
<div class="a sf" style="left:520px;top:887px;width:187px;height:20px"></div>
<div class="a sv" style="left:518px;top:888px;width:184px">21 311,00 DA</div>
<div class="a sl" style="left:735px;top:863px;">BENEFICES</div>
<div class="a sb" style="left:719px;top:879px;width:185px;height:36px"></div>
<div class="a sf" style="left:721px;top:887px;width:182px;height:20px"></div>
<div class="a sv" style="left:719px;top:888px;width:179px">9 610,00 DA</div>
<div class="a sl" style="left:910px;top:863px;letter-spacing:0.25px">Remise C</div>
<div class="a sb" style="left:915px;top:879px;width:130px;height:36px"></div>
<div class="a sf" style="left:917px;top:887px;width:127px;height:20px"></div>
<div class="a sv" style="left:915px;top:888px;width:124px">0,00 DA</div>
<div class="a sl" style="left:1049px;top:865px;letter-spacing:0.25px">Remise F</div>
<div class="a sb" style="left:1054px;top:881px;width:130px;height:36px"></div>
<div class="a sf" style="left:1056px;top:889px;width:127px;height:20px"></div>
<div class="a sv" style="left:1054px;top:890px;width:124px">0,00 DA</div>
<div class="a sl" style="left:1209px;top:863px;">CHARGES</div>
<div class="a sb" style="left:1191px;top:879px;width:184px;height:36px"></div>
<div class="a sf" style="left:1193px;top:887px;width:181px;height:20px"></div>
<div class="a sv" style="left:1191px;top:888px;width:178px">0,00 DA</div>
<div class="a sl" style="left:1406px;top:863px;">BENEFICE NET</div>
<div class="a sb" style="left:1391px;top:879px;width:189px;height:36px"></div>
<div class="a sf" style="left:1393px;top:887px;width:186px;height:20px"></div>
<div class="a sv" style="left:1391px;top:888px;width:183px">9 610,00 DA</div>
</body></html>
